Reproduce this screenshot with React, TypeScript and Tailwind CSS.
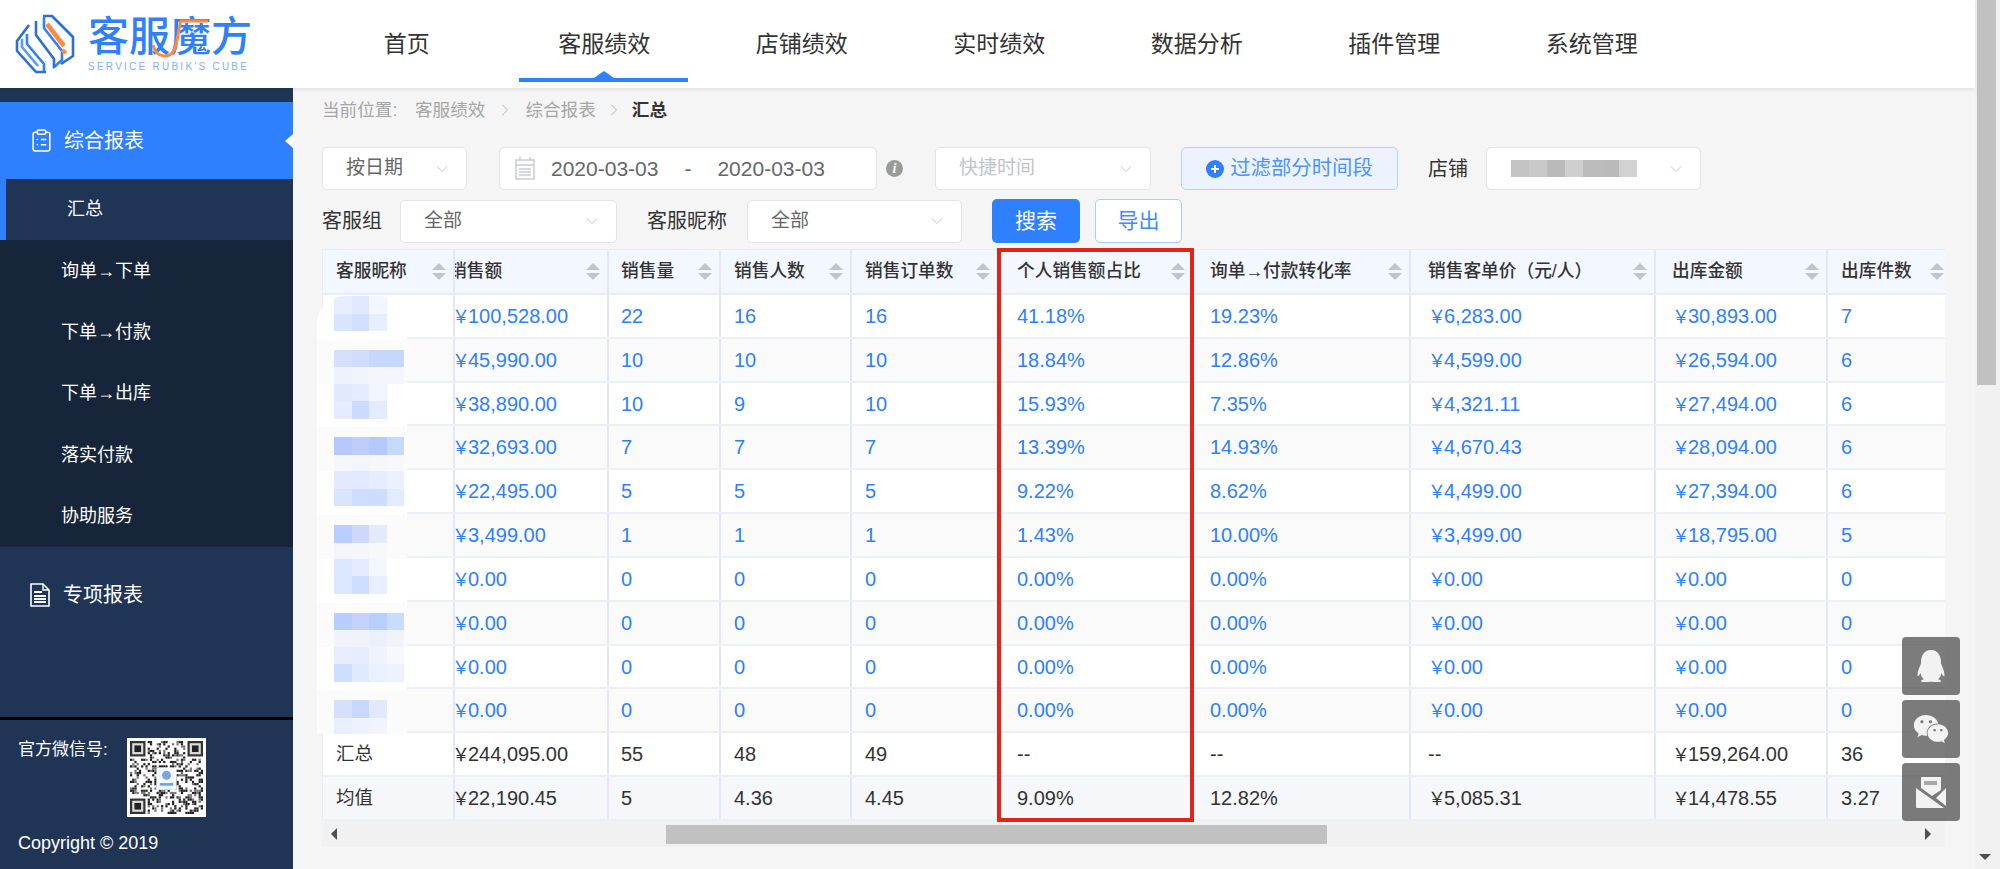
import { ChevronDown, ChevronRight, ClipboardList } from "lucide-react";
import { FaQq, FaWeixin } from "react-icons/fa";

const navItems = ["首页", "客服绩效", "店铺绩效", "实时绩效", "数据分析", "插件管理", "系统管理"];
const subMenu = ["汇总", "询单→下单", "下单→付款", "下单→出库", "落实付款", "协助服务"];

const columns = [
  { title: "客服昵称", cell: "w-[132px] pl-[13px]" },
  { title: "销售额", cell: "w-[154px] pl-0", inner: "-ml-[6px]", body: "-ml-[3px]" },
  { title: "销售量", cell: "w-[112px] pl-[12px]" },
  { title: "销售人数", cell: "w-[131px] pl-[13px]" },
  { title: "销售订单数", cell: "w-[147px] pl-[13px]" },
  { title: "个人销售额占比", cell: "w-[195px] pl-[18px]" },
  { title: "询单→付款转化率", cell: "w-[217px] pl-[16px]" },
  { title: "销售客单价（元/人）", cell: "w-[245px] pl-[17px]" },
  { title: "出库金额", cell: "w-[172px] pl-[16px]" },
  { title: "出库件数", cell: "w-[125px] pl-[13px] border-r-0" },
];

const rows = [
  ["", "￥100,528.00", "22", "16", "16", "41.18%", "19.23%", "￥6,283.00", "￥30,893.00", "7"],
  ["", "￥45,990.00", "10", "10", "10", "18.84%", "12.86%", "￥4,599.00", "￥26,594.00", "6"],
  ["", "￥38,890.00", "10", "9", "10", "15.93%", "7.35%", "￥4,321.11", "￥27,494.00", "6"],
  ["", "￥32,693.00", "7", "7", "7", "13.39%", "14.93%", "￥4,670.43", "￥28,094.00", "6"],
  ["", "￥22,495.00", "5", "5", "5", "9.22%", "8.62%", "￥4,499.00", "￥27,394.00", "6"],
  ["", "￥3,499.00", "1", "1", "1", "1.43%", "10.00%", "￥3,499.00", "￥18,795.00", "5"],
  ["", "￥0.00", "0", "0", "0", "0.00%", "0.00%", "￥0.00", "￥0.00", "0"],
  ["", "￥0.00", "0", "0", "0", "0.00%", "0.00%", "￥0.00", "￥0.00", "0"],
  ["", "￥0.00", "0", "0", "0", "0.00%", "0.00%", "￥0.00", "￥0.00", "0"],
  ["", "￥0.00", "0", "0", "0", "0.00%", "0.00%", "￥0.00", "￥0.00", "0"],
  ["汇总", "￥244,095.00", "55", "48", "49", "--", "--", "--", "￥159,264.00", "36"],
  ["均值", "￥22,190.45", "5", "4.36", "4.45", "9.09%", "12.82%", "￥5,085.31", "￥14,478.55", "3.27"],
];

// blurred-out nicknames, two lines of mosaic per row
const mosaics = [
  [["bg-[#e6eeff]", "bg-[#e0eaff]", "bg-[#f2f7ff]"], ["bg-[#d9e5ff]", "bg-[#d3dffe]", "bg-[#e6efff]"]],
  [["bg-[#d5e0fc]", "bg-[#cfddfa]", "bg-[#c4d8fc]", "bg-[#c4d8fc]"], ["bg-[#eef2fb]", "bg-[#f2f4fb]", "bg-[#f3f5fa]", "bg-[#f3f5fa]"]],
  [["bg-[#e0e9ff]", "bg-[#e3edff]", "bg-[#f0f5ff]"], ["bg-[#e6ecff]", "bg-[#cbdaff]", "bg-[#e2ebff]"]],
  [["bg-[#b7c9fb]", "bg-[#bfcdfb]", "bg-[#b5c9fc]", "bg-[#c6d9fc]"], ["bg-[#f6f7fb]", "bg-[#f4f5fb]", "bg-[#f6f7fb]", "bg-[#f7f8fb]"]],
  [["bg-[#e3e9ff]", "bg-[#e1eaff]", "bg-[#e5edff]", "bg-[#ebf2ff]"], ["bg-[#d9e4ff]", "bg-[#cddcff]", "bg-[#cddcff]", "bg-[#e2ebff]"]],
  [["bg-[#b9cdfe]", "bg-[#cfd8fb]", "bg-[#e3ebfb]"], ["bg-[#f3f5fa]", "bg-[#f5f6fa]", "bg-[#f7f8fa]"]],
  [["bg-[#dce8ff]", "bg-[#e6ebff]", "bg-[#f3f8ff]"], ["bg-[#dbe6ff]", "bg-[#cddeff]", "bg-[#e8f0ff]"]],
  [["bg-[#b8cefd]", "bg-[#c6d0f9]", "bg-[#b8cffc]", "bg-[#cadcfb]"], ["bg-[#f1f3fa]", "bg-[#f0f3fa]", "bg-[#ebf0fa]", "bg-[#f0f3fa]"]],
  [["bg-[#e8eeff]", "bg-[#e7ecff]", "bg-[#eff3fe]", "bg-[#f6f8ff]"], ["bg-[#cfdefe]", "bg-[#e0eaff]", "bg-[#e9f0ff]", "bg-[#edf2ff]"]],
  [["bg-[#d5e0fa]", "bg-[#c6d8fc]", "bg-[#e1e9fa]"], ["bg-[#eaf0fb]", "bg-[#eef2fb]", "bg-[#f2f4fb]"]],
];

const shopMosaic = ["bg-[#c4c4c4]", "bg-[#c9c9c9]", "bg-[#bababa]", "bg-[#cfcfcf]", "bg-[#bcbcbc]", "bg-[#bababa]", "bg-[#d2d2d2]"];

function Logo() {
  return (
    <div className="flex w-[308px] shrink-0 items-center pl-[15px]">
      <svg width="60" height="60" viewBox="0 0 60 60" fill="none" strokeWidth="2.6" strokeLinejoin="round">
        <path d="M28 2H37L58 23V42L46 50" stroke="#2c6fd1" />
        <path d="M29 3V14L47 37V46L38 54" stroke="#2f80ff" />
        <path d="M21 7V21L39 45V53" stroke="#2c6fd1" />
        <path d="M14 11L2 27V37L21 58H31" stroke="#2c6fd1" />
        <path d="M12 20V30L29 50V57" stroke="#2f80ff" />
        <path d="M7 25V33L23 52" stroke="#5b9bff" />
        <path d="M32 10L49 32" stroke="#ff8a3c" strokeWidth="4.5" />
        <path d="M47 36L51 39" stroke="#ff8a3c" strokeWidth="4" />
      </svg>
      <div className="ml-[13px] flex flex-col">
        <div className="relative h-[44px] text-[41px] leading-[44px] font-medium whitespace-nowrap text-[#2f80ff]">
          客服魔方
          <svg className="absolute top-[3px] left-[64px]" width="58" height="44" viewBox="0 0 58 44" fill="none">
            <path d="M1 27C4 40 16 40 21 34C26 27 26 10 29 3H56" stroke="#ff8a3c" strokeWidth="3" />
          </svg>
        </div>
        <div className="mt-[2px] text-[10px] leading-[12px] tracking-[0.225em] whitespace-nowrap text-[#7fb0ff]">
          SERVICE RUBIK'S CUBE
        </div>
      </div>
    </div>
  );
}

function SortIcon() {
  return (
    <svg className="shrink-0" width="14" height="17" viewBox="0 0 14 17" fill="#c0c4cc">
      <path d="M7 0L14 7H0Z" />
      <path d="M7 17L14 10H0Z" />
    </svg>
  );
}

function Select({ className, text, muted }: { className: string; text: string; muted?: boolean }) {
  return (
    <div className={`flex h-[43px] shrink-0 items-center justify-between rounded-[5px] border border-[#e2e4ea] bg-white pr-[14px] pl-[23px] text-[19px] ${className} ${muted ? "text-[#c0c4cc]" : "text-[#666]"}`}>
      <span>{text}</span>
      <ChevronDown size={20} strokeWidth={1} className="text-[#b4bccc]" />
    </div>
  );
}

function Value({ text }: { text: string }) {
  if (text.startsWith("￥")) {
    return (
      <span className="whitespace-nowrap">
        <span className="mr-[-2px] text-[18px]">￥</span>
        {text.slice(1)}
      </span>
    );
  }
  return <span className="whitespace-nowrap">{text}</span>;
}

function QrCode() {
  const n = 33;
  const cells = [];
  const finder = (x: number, y: number) => x < 8 && y < 8;
  for (let y = 0; y < n; y++) {
    for (let x = 0; x < n; x++) {
      if (finder(x, y) || finder(n - 1 - x, y) || finder(x, n - 1 - y)) continue;
      const h = (x * 7 + y * 13 + ((x * y * 31) ^ (x + y * 3))) % 7;
      if (h < 3) cells.push(<rect key={`${x}-${y}`} x={x} y={y} width="1" height="1" fill={h === 0 ? "#777" : "#222"} />);
    }
  }
  const marks: [number, number][] = [[0, 0], [n - 7, 0], [0, n - 7]];
  return (
    <svg className="shrink-0 bg-white p-[3px]" width="79" height="79" viewBox="0 0 33 33">
      {cells}
      {marks.map(([x, y]) => (
        <g key={`${x}-${y}`}>
          <rect x={x} y={y} width="7" height="7" fill="#333" />
          <rect x={x + 1} y={y + 1} width="5" height="5" fill="#ddd" />
          <rect x={x + 2} y={y + 2} width="3" height="3" fill="#222" />
        </g>
      ))}
      <rect x="12" y="12" width="9" height="10" fill="#f4f8ff" />
      <circle cx="16.5" cy="15.5" r="2" fill="#7aa5dd" />
      <rect x="13.5" y="19" width="6" height="1.2" fill="#6aa0f5" />
    </svg>
  );
}

function Sidebar() {
  return (
    <aside className="flex w-[293px] shrink-0 flex-col bg-[#203555] text-white">
      <div className="h-[14px]" />
      <div className="relative flex h-[77px] items-center bg-[#2f80ff] pl-[29px] text-[20px]">
        <ClipboardList size={25} strokeWidth={1.5} />
        <span className="ml-[10px]">综合报表</span>
        <span className="absolute right-0 h-0 w-0 border-y-[7px] border-r-[8px] border-y-transparent border-r-white" />
      </div>
      <div className="flex flex-col bg-[#162539]">
        {subMenu.map((item, i) => (
          <div
            key={item}
            className={`flex h-[61.4px] items-center pl-[61px] text-[18px] ${i === 0 ? "border-l-[6px] border-[#2f80ff] bg-[#203555] pl-[55px]" : ""}`}
          >
            {item}
          </div>
        ))}
      </div>
      <div className="flex h-[96px] items-center pl-[30px] text-[20px]">
        <svg width="20" height="24" viewBox="0 0 20 24" fill="none">
          <path d="M1 1H13L19 7V23H1Z" stroke="#fff" strokeWidth="1.6" />
          <path d="M13 1V7H19" stroke="#fff" strokeWidth="1.4" />
          <path d="M4 9H12M4 13H16M4 16H16M4 19H16" stroke="#fff" strokeWidth="2" />
        </svg>
        <span className="ml-[13px]">专项报表</span>
      </div>
      <div className="flex-1" />
      <div className="h-[3px] bg-black" />
      <div className="flex h-[149px] flex-col pl-[18px]">
        <div className="mt-[18px] flex items-start">
          <span className="w-[109px] text-[17px] leading-[24px]">官方微信号:</span>
          <QrCode />
        </div>
        <div className="mt-[14px] text-[18px] leading-[24px]">Copyright © 2019</div>
      </div>
    </aside>
  );
}

function DataTable() {
  return (
    <div className="relative w-[1623px]">
      <div className="overflow-hidden border-t border-l border-[#e9ecf5]">
        <div className="flex h-[45px] border-b-2 border-[#e9ecf7] bg-[#f3f7ff] text-[17.7px] font-medium text-[#333]">
          {columns.map((col) => (
            <div key={col.title} className={`flex shrink-0 items-center justify-between overflow-hidden border-r-2 border-[#e1e7f8] pr-[7px] ${col.cell}`}>
              <span className={`whitespace-nowrap ${col.inner ?? ""}`}>{col.title}</span>
              <SortIcon />
            </div>
          ))}
        </div>
        {rows.map((row, r) => {
          const blue = r < 10;
          const bg = r === 11 ? "bg-[#f5f7fb]" : r % 2 === 1 && r < 10 ? "bg-[#fafafa]" : "bg-white";
          return (
            <div key={r} className={`flex h-[43.83px] border-b-2 border-[#eef0f7] ${bg} ${blue ? "text-[#2f80ff]" : "text-[#333]"}`}>
              {columns.map((col, c) => (
                <div key={col.title} className={`flex shrink-0 items-center overflow-hidden border-r-2 border-[#e1e7f8] ${col.cell} ${c === 0 ? "text-[18.5px]" : "text-[20px]"}`}>
                  <span className={col.body ?? ""}>
                    <Value text={row[c]} />
                  </span>
                </div>
              ))}
            </div>
          );
        })}
      </div>

      {/* brushed-over nickname column */}
      <div className="absolute top-[47px] left-[-5px] flex w-[90px] flex-col overflow-hidden rounded-t-[28px]">
        {mosaics.map((lines, i) => (
          <div key={i} className={`flex h-[43.83px] flex-col pl-[17px] ${i % 2 === 0 ? "bg-white" : "bg-[#fbfbfb] pt-[10px]"}`}>
            {lines.map((line, j) => (
              <div key={j} className="flex h-[17.5px] shrink-0">
                {line.map((color, k) => (
                  <div key={k} className={`h-full w-[17.5px] ${color}`} />
                ))}
              </div>
            ))}
          </div>
        ))}
      </div>

      {/* highlighted column */}
      <div className="pointer-events-none absolute top-[-1px] left-[675px] h-[574px] w-[197px] border-4 border-[#e2231a]" />

      {/* horizontal scrollbar */}
      <div className="flex h-[26px] items-start bg-[#f1f1f1] pt-[4px]">
        <div className="ml-[9px] flex h-[19px] w-[20px] items-center">
          <span className="h-0 w-0 border-y-[6px] border-r-[6px] border-y-transparent border-r-[#505050]" />
        </div>
        <div className="ml-[315px] h-[19px] w-[661px] bg-[#c1c1c1]" />
        <div className="ml-auto flex h-[19px] w-[20px] items-center">
          <span className="h-0 w-0 border-y-[6px] border-l-[6px] border-y-transparent border-l-[#505050]" />
        </div>
      </div>
    </div>
  );
}

function Filters() {
  return (
    <>
      <div className="mt-[15px] flex h-[43px] items-center text-[#333]">
        <Select className="w-[145px]" text="按日期" />
        <div className="ml-[32px] flex h-[43px] w-[378px] shrink-0 items-center rounded-[5px] border border-[#e2e4ea] bg-white text-[21px] text-[#666]">
          <svg className="ml-[15px]" width="20" height="23" viewBox="0 0 20 23" fill="none" stroke="#c9ccd4" strokeWidth="1.5">
            <rect x="1" y="3" width="18" height="19" />
            <path d="M1 8H19M5 0V4M15 0V4M4 12H16M4 15H16M4 18H16" />
          </svg>
          <span className="ml-[16px]">2020-03-03</span>
          <span className="ml-[26px]">-</span>
          <span className="ml-[26px]">2020-03-03</span>
        </div>
        <span className="ml-[9px] flex h-[17px] w-[17px] shrink-0 items-center justify-center rounded-full bg-[#9a9a9a] font-['Liberation_Serif',serif] text-[14px] font-bold text-white italic">
          i
        </span>
        <Select className="ml-[32px] w-[216px]" text="快捷时间" muted />
        <div className="ml-[30px] flex h-[43px] w-[217px] shrink-0 items-center justify-center rounded-[5px] border border-[#b3d1ff] bg-[#ecf3ff] text-[20.4px] text-[#4d94ff]">
          <svg width="18" height="18" viewBox="0 0 18 18">
            <circle cx="9" cy="9" r="9" fill="#2f80ff" />
            <path d="M9 5V13M5 9H13" stroke="#fff" strokeWidth="2" />
          </svg>
          <span className="ml-[6px]">过滤部分时间段</span>
        </div>
        <span className="ml-[30px] shrink-0 text-[20px]">店铺</span>
        <div className="ml-[18px] flex h-[43px] w-[215px] shrink-0 items-center justify-between rounded-[5px] border border-[#e2e4ea] bg-white pr-[14px] pl-[24px]">
          <div className="flex h-[17px]">
            {shopMosaic.map((color, i) => (
              <div key={i} className={`h-full w-[18px] ${color}`} />
            ))}
          </div>
          <ChevronDown size={20} strokeWidth={1} className="text-[#b4bccc]" />
        </div>
      </div>
      <div className="mt-[9px] flex h-[44px] items-center text-[20px] text-[#333]">
        <span className="w-[78px] shrink-0">客服组</span>
        <Select className="w-[217px]" text="全部" />
        <span className="ml-[30px] w-[100px] shrink-0">客服昵称</span>
        <Select className="w-[215px]" text="全部" />
        <div className="ml-[30px] flex h-[44px] w-[88px] shrink-0 items-center justify-center rounded-[5px] bg-[#2f80ff] text-[21px] text-white">
          搜索
        </div>
        <div className="ml-[15px] flex h-[44px] w-[87px] shrink-0 items-center justify-center rounded-[5px] border border-[#a9c9ff] bg-white text-[21px] text-[#3f8cff]">
          导出
        </div>
      </div>
    </>
  );
}

export default function App() {
  return (
    <div className="relative flex h-[869px] w-[2000px] overflow-hidden bg-[#f5f5f5] font-['Liberation_Sans','Noto_Sans_CJK_SC',sans-serif]">
      <div className="flex w-[1975px] shrink-0 flex-col">
        <header className="z-10 flex h-[88px] shrink-0 bg-white shadow-[0_2px_4px_rgba(0,0,0,0.08)]">
          <Logo />
          <nav className="flex">
            {navItems.map((item, i) => (
              <div key={item} className="relative flex w-[197.5px] items-center justify-center text-[23px] text-[#333]">
                {item}
                {i === 1 && (
                  <>
                    <span className="absolute bottom-[6px] left-[13px] h-[4px] w-[169px] bg-[#2f80ff]" />
                    <span className="absolute bottom-[10px] left-[88px] h-0 w-0 border-x-[10px] border-b-[7px] border-x-transparent border-b-[#2f80ff]" />
                  </>
                )}
              </div>
            ))}
          </nav>
        </header>
        <div className="flex min-h-0 flex-1">
          <Sidebar />
          <main className="flex-1 pl-[29px]">
            <div className="flex h-[44px] items-center text-[17.6px] text-[#a6a6a6]">
              <span className="w-[90px]">当前位置:</span>
              <span className="ml-[3px]">客服绩效</span>
              <ChevronRight size={20} strokeWidth={1} className="mx-[10px]" />
              <span>综合报表</span>
              <ChevronRight size={20} strokeWidth={1} className="mx-[8px]" />
              <span className="font-bold text-[#333]">汇总</span>
            </div>
            <Filters />
            <div className="mt-[6px]">
              <DataTable />
            </div>
          </main>
        </div>
      </div>

      {/* page scrollbar */}
      <div className="flex w-[25px] shrink-0 flex-col bg-[#f1f1f1] pr-[4px] pl-[2px]">
        <div className="h-[385px] bg-[#c1c1c1]" />
        <div className="mt-auto mb-[9px] ml-[2px] h-0 w-0 border-x-[6px] border-t-[6px] border-x-transparent border-t-[#505050]" />
      </div>

      {/* floating contact buttons */}
      <div className="absolute top-[637px] left-[1902px] flex flex-col gap-[5px]">
        <div className="flex h-[58px] w-[58px] items-center justify-center rounded-[4px] bg-[#505050]/75 text-[#f2f2f2]">
          <FaQq size={32} />
        </div>
        <div className="flex h-[58px] w-[58px] items-center justify-center rounded-[4px] bg-[#505050]/75 text-[#f2f2f2]">
          <FaWeixin size={36} />
        </div>
        <div className="flex h-[58px] w-[58px] items-center justify-center rounded-[4px] bg-[#505050]/75">
          <svg width="30" height="31" viewBox="0 0 30 31">
            <path d="M5 0H25V13L16 19L5 11Z" fill="#f2f2f2" />
            <rect x="8" y="4" width="13" height="4" fill="#a8a8a8" />
            <path d="M0 11L28 31H1Q0 31 0 30ZM30 11V29L20 21Z" fill="#f2f2f2" />
          </svg>
        </div>
      </div>
    </div>
  );
}
